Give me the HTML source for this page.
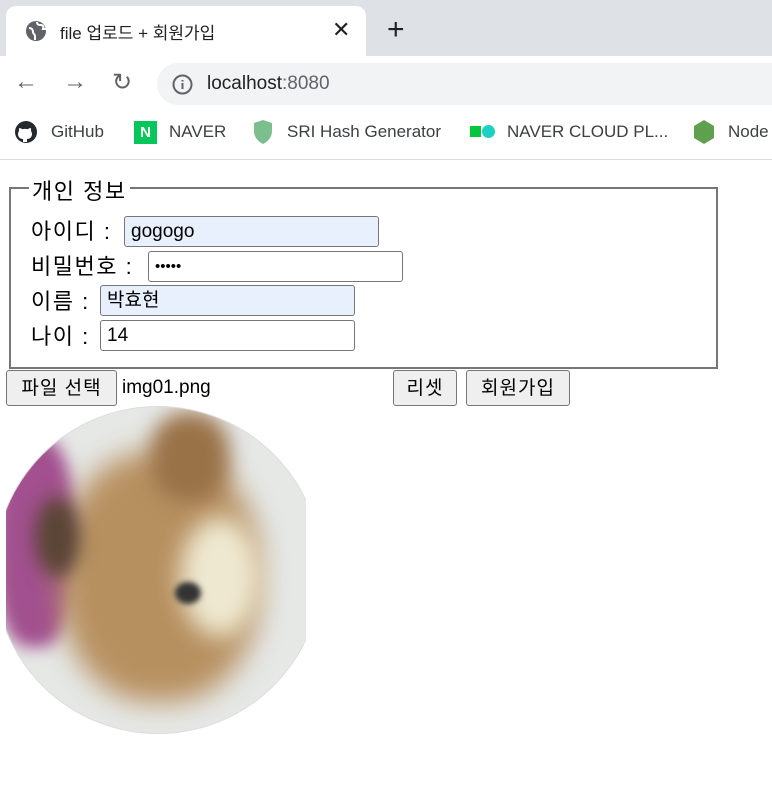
<!DOCTYPE html>
<html><head><meta charset="utf-8"><style>
*{margin:0;padding:0;box-sizing:border-box}
body{width:772px;height:799px;overflow:hidden;background:#fff;position:relative;font-family:"Liberation Sans","Noto Sans CJK KR",sans-serif}
.a{position:absolute}
.ui{font-family:"Liberation Sans","Noto Sans CJK KR",sans-serif;color:#3c4043}
.lbl{position:absolute;font-size:22px;letter-spacing:1.5px;color:#000;font-family:"Liberation Sans","Noto Sans CJK KR",sans-serif}
.inp{position:absolute;height:31px;border:1px solid #767676;border-radius:3px;font-size:19px;padding-left:6px;line-height:29px;color:#000}
.btn{position:absolute;height:36px;border:1px solid #767676;border-radius:3px;background:#efefef;font-size:19px;letter-spacing:1px;text-align:center;line-height:36px;color:#000}
</style></head><body>
<div class="a" style="left:0;top:0;width:772px;height:56px;background:#dee1e6"></div>
<div class="a" style="left:6px;top:6px;width:360px;height:52px;background:#fff;border-radius:10px 10px 0 0"></div>
<svg class="a" style="left:25px;top:20px" width="22" height="22" viewBox="0 0 22 22"><circle cx="11" cy="11" r="10" fill="#5f6368"/><path d="M4 8c3 0 4 2 4 4s2 2 2 4v4M12 2c0 3 2 3 4 3s3 2 2 4h3" stroke="#fff" stroke-width="2" fill="none"/></svg>
<div class="a ui" style="left:60px;top:19px;font-size:17px;color:#202124">file 업로드 + 회원가입</div>
<div class="a ui" style="left:332px;top:17px;font-size:22px;color:#202124">✕</div>
<div class="a ui" style="left:387px;top:13px;font-size:30px;color:#202124;font-weight:300">+</div>
<div class="a ui" style="left:14px;top:68px;font-size:24px;color:#5f6368">←</div>
<div class="a ui" style="left:63px;top:68px;font-size:24px;color:#5f6368">→</div>
<div class="a ui" style="left:112px;top:68px;font-size:24px;color:#5f6368">↻</div>
<div class="a" style="left:157px;top:63px;width:640px;height:42px;background:#f1f3f4;border-radius:21px"></div>
<svg class="a" style="left:172px;top:74px" width="21" height="21" viewBox="0 0 21 21"><circle cx="10.5" cy="10.5" r="9" stroke="#5f6368" stroke-width="2" fill="none"/><path d="M10.5 9v6M10.5 6v1.5" stroke="#5f6368" stroke-width="2"/></svg>
<div class="a ui" style="left:207px;top:73px;font-size:19px;color:#202124">localhost<span style="color:#5f6368">:8080</span></div>
<svg class="a" style="left:14px;top:120px" width="24" height="24" viewBox="0 0 24 24"><circle cx="12" cy="12" r="11" fill="#24292e"/><path d="M9 22v-3c-3 0-5-2-5-5 0-1 .5-2 1-3-.2-1 0-2 .3-3 1 0 2 .6 3 1.3a9 9 0 0 1 5.4 0c1-.7 2-1.3 3-1.3.3 1 .5 2 .3 3 .6 1 1 2 1 3 0 3-2 5-5 5v3" fill="#fff"/></svg>
<div class="a ui" style="left:51px;top:122px;font-size:17px">GitHub</div>
<div class="a" style="left:134px;top:121px;width:23px;height:23px;background:#03c75a;color:#fff;font-weight:bold;font-size:15px;text-align:center;line-height:23px">N</div>
<div class="a ui" style="left:169px;top:122px;font-size:17px">NAVER</div>
<svg class="a" style="left:252px;top:118px" width="22" height="28" viewBox="0 0 22 28"><path d="M11 2l9 3v8c0 7-5 11-9 13-4-2-9-6-9-13V5z" fill="#7bbf8e"/></svg>
<div class="a ui" style="left:287px;top:122px;font-size:17px">SRI Hash Generator</div>
<div class="a" style="left:470px;top:126px;width:11px;height:11px;background:#00c73c"></div>
<div class="a" style="left:482px;top:125px;width:13px;height:13px;background:#1ecfc4;border-radius:50%"></div>
<div class="a ui" style="left:507px;top:122px;font-size:17px">NAVER CLOUD PL...</div>
<svg class="a" style="left:692px;top:119px" width="24" height="26" viewBox="0 0 24 26"><path d="M12 1l10 6v12l-10 6-10-6V7z" fill="#5fa04e"/></svg>
<div class="a ui" style="left:728px;top:122px;font-size:17px">Node</div>
<div class="a" style="left:0;top:159px;width:772px;height:1px;background:#dadce0"></div>

<div class="a" style="left:9px;top:187px;width:709px;height:182px;border:2px solid #767676"></div>
<div class="lbl" style="left:29px;top:174px;background:#fff;padding:0 3px">개인 정보</div>
<div class="lbl" style="left:31px;top:214px">아이디 :</div>
<div class="inp" style="left:124px;top:216px;width:255px;background:#e8f0fe">gogogo</div>
<div class="lbl" style="left:31px;top:249px">비밀번호 :</div>
<div class="inp" style="left:148px;top:251px;width:255px;background:#fff;font-size:15px">•••••</div>
<div class="lbl" style="left:31px;top:284px">이름 :</div>
<div class="inp" style="left:100px;top:285px;width:255px;background:#e8f0fe">박효현</div>
<div class="lbl" style="left:31px;top:319px">나이 :</div>
<div class="inp" style="left:100px;top:320px;width:255px;background:#fff">14</div>
<div class="btn" style="left:6px;top:370px;width:111px">파일 선택</div>
<div class="lbl" style="left:122px;top:377px;font-size:19px;letter-spacing:0">img01.png</div>
<div class="btn" style="left:393px;top:370px;width:64px">리셋</div>
<div class="btn" style="left:466px;top:370px;width:104px">회원가입</div>

<div class="a" style="left:6px;top:405px;width:300px;height:331px;overflow:hidden">
<div class="a" style="left:-12px;top:1px;width:328px;height:328px;border-radius:50%;overflow:hidden;background:#e6e8e6;border:1px solid #ddd">
<div class="a" style="left:0;top:30px;width:80px;height:210px;background:#a2508f;border-radius:40%;filter:blur(8px)"></div>
<div class="a" style="left:65px;top:45px;width:200px;height:250px;background:#b79060;border-radius:45%;filter:blur(14px)"></div>
<div class="a" style="left:155px;top:5px;width:80px;height:90px;background:#9a7248;border-radius:45%;filter:blur(10px)"></div>
<div class="a" style="left:185px;top:110px;width:80px;height:120px;background:#eee8d0;border-radius:50%;filter:blur(12px)"></div>
<div class="a" style="left:180px;top:175px;width:26px;height:22px;background:#333;border-radius:50%;filter:blur(3px)"></div>
<div class="a" style="left:40px;top:90px;width:45px;height:80px;background:#5a4535;border-radius:50%;filter:blur(9px)"></div>
</div></div>
</body></html>
